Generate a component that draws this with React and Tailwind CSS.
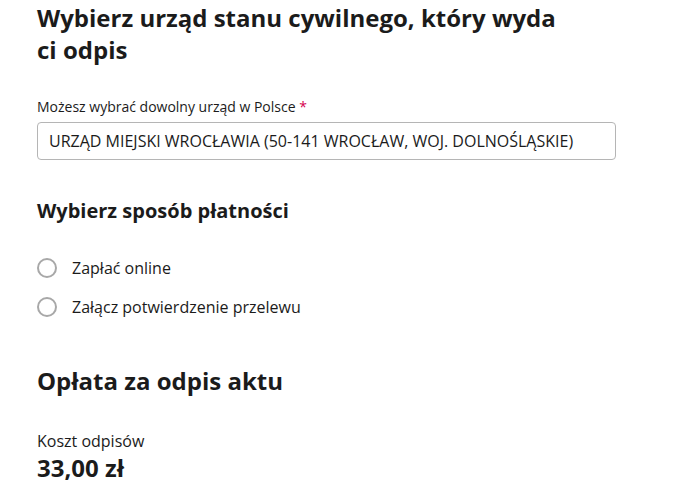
const options = ["Zapłać online", "Załącz potwierdzenie przelewu"];

const App = () => {
  return (
    <div className="min-h-screen bg-white text-[#1b1b1b] font-['Open_Sans',sans-serif] px-[37px] pt-[2px]">
      <h1 className="text-[24px] leading-[32px] font-bold w-[530px]">
        Wybierz urząd stanu cywilnego, który wyda ci odpis
      </h1>

      <label className="block mt-[31px] text-[14px] leading-[20px]">
        Możesz wybrać dowolny urząd w Polsce <span className="text-[#d5004f]">*</span>
      </label>
      <div className="mt-[5px] w-[579px] h-[38px] border border-[#b5b5b5] rounded-[4px] flex items-center px-[11px] text-[16px]">
        URZĄD MIEJSKI WROCŁAWIA (50-141 WROCŁAW, WOJ. DOLNOŚLĄSKIE)
      </div>

      <h2 className="mt-[37px] text-[20px] leading-[28px] font-bold">Wybierz sposób płatności</h2>

      <div className="mt-[31px] flex flex-col gap-[15px]">
        {options.map((o) => (
          <label key={o} className="flex items-center gap-[15px] h-[24px] text-[16px]">
            <span className="w-[20px] h-[20px] rounded-full border-2 border-[#a8a8a8] bg-white" />
            {o}
          </label>
        ))}
      </div>

      <h2 className="mt-[46px] text-[24px] leading-[32px] font-bold">Opłata za odpis aktu</h2>

      <p className="mt-[32px] text-[16px] leading-[24px]">Koszt odpisów</p>
      <p className="text-[24px] leading-[32px] font-bold -mt-[1px]">33,00 zł</p>
    </div>
  );
};

export default App;
